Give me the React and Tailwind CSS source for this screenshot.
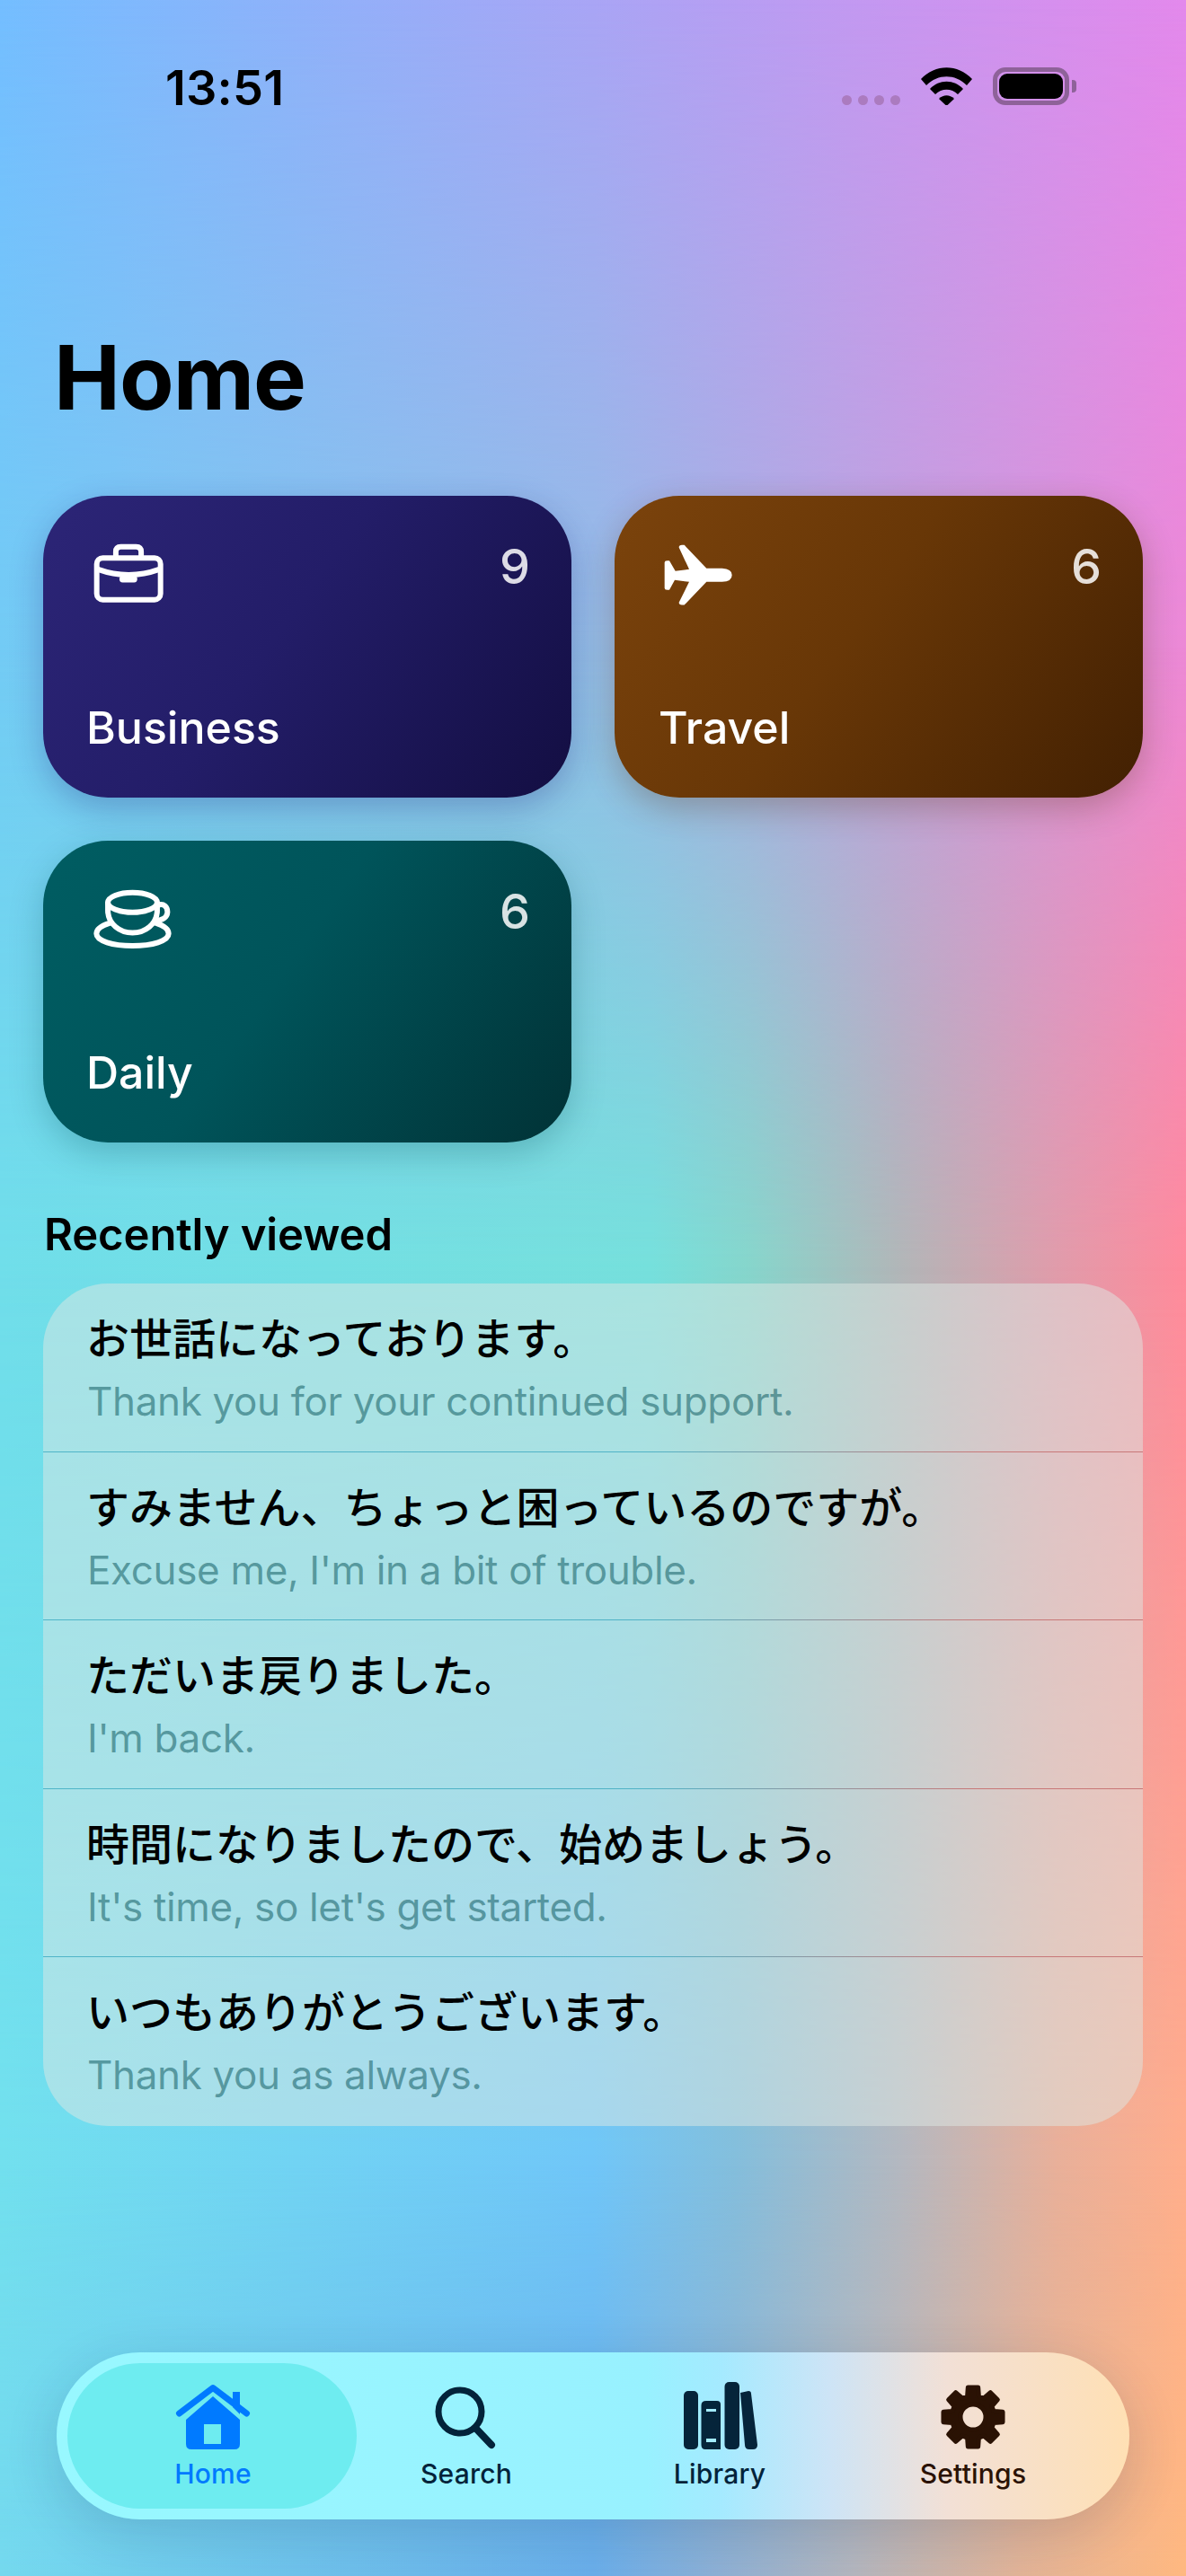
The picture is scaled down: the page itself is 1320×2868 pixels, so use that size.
import React from "react";

const gear = (() => {
  const c = 36, pts = [];
  for (let k = 0; k < 8; k++) {
    const a = (k * Math.PI) / 4 - Math.PI / 2;
    const p = (r, d) => {
      const t = a + d;
      return `${(c + r * Math.cos(t)).toFixed(2)} ${(c + r * Math.sin(t)).toFixed(2)}`;
    };
    pts.push(p(24, -0.27), p(33.5, -0.17), p(33.5, 0.17), p(24, 0.27));
  }
  const hole = `M${c + 14} ${c}A14 14 0 1 0 ${c - 14} ${c}A14 14 0 1 0 ${c + 14} ${c}Z`;
  return `M${pts.join("L")}Z${hole}`;
})();

const Briefcase = () => (
  <svg viewBox="185 195 245 205" width="82" height="68" fill="none" stroke="#fff" strokeWidth="18" strokeLinejoin="round" strokeLinecap="round">
    <rect x="201" y="247" width="214" height="140" rx="20" />
    <path d="M265 245V226Q265 209 282 209H333Q350 209 350 226V245" />
    <path d="M205 285Q308 322 411 285" />
    <path d="M288 318H326" strokeWidth="22" />
  </svg>
);

const Plane = () => (
  <svg viewBox="175 190 240 215" width="80" height="72" fill="#fff">
    <path d="M180 256Q180 250 188 250H196L216 285L262 279L228 206Q228 198 238 198H246L320 276H372Q405 278 405 298Q405 320 372 321H320L246 398H238Q228 398 228 390L262 321L214 315L196 348H188Q180 348 180 342Z" />
  </svg>
);

const Cup = () => (
  <svg viewBox="185 172 272 212" width="91" height="71" fill="none" stroke="#fff" strokeWidth="18" strokeLinecap="round">
    <ellipse cx="321" cy="222" rx="82" ry="33" />
    <path d="M239 224V250C240 295 280 323 321 323C362 323 402 295 403 250V224" />
    <path d="M404 232C425 222 438 238 437 255C436 272 420 282 396 282" />
    <path d="M244 291C215 300 201 313 201 326C201 350 255 366 321 366C387 366 441 350 441 326C441 313 428 300 400 291" />
  </svg>
);

const HomeIcon = () => (
  <svg viewBox="0 0 100 80" width="100" height="80">
    <path d="M72 13H80V38L72 30Z" fill="#007aff" />
    <path d="M50 18L80 44V71Q80 77 74 77H26Q20 77 20 71V44ZM40 49V71H59V49Z" fill="#007aff" fillRule="evenodd" />
    <path d="M12.500 37L50 8.500L87.500 37" fill="none" stroke="#007aff" strokeWidth="7" strokeLinecap="round" strokeLinejoin="round" />
  </svg>
);

const SearchIcon = () => (
  <svg viewBox="0 0 100 80" width="100" height="80" fill="none" stroke="#03233a" strokeWidth="7" strokeLinecap="round">
    <circle cx="43" cy="35" r="24" />
    <path d="M60 53L78 72" strokeWidth="8" />
  </svg>
);

const LibraryIcon = () => (
  <svg viewBox="0 0 100 80" width="100" height="80" fill="#05243a">
    <rect x="10" y="12" width="16" height="65" rx="5" />
    <path d="M35 23H47Q51 23 51 27V77H34Q29.500 77 29.500 72V28Q29.500 23 35 23ZM35 32V35H46V32ZM35 65V69H46V65Z" fillRule="evenodd" />
    <rect x="55.500" y="2" width="16.500" height="75" rx="5" />
    <path d="M73 14L82 12Q85 12 85 15L92 72Q92 77 87 77H83Q78 77 78 72Z" />
  </svg>
);

const SettingsIcon = () => (
  <svg viewBox="-14 -5 100 80" width="100" height="80" fill="#2a1204" stroke="#2a1204" strokeWidth="5" strokeLinejoin="round" fillRule="evenodd">
    <path d={gear} />
  </svg>
);

const cards = [
  { title: "Business", n: 9, Icon: Briefcase, bg: "bg-[linear-gradient(125deg,#2c2577_0%,#231d68_45%,#130e42_100%)]", shadow: "shadow-[0_12px_36px_rgba(30,30,120,0.28)]", ml: "ml-[4px]" },
  { title: "Travel", n: 6, Icon: Plane, bg: "bg-[linear-gradient(125deg,#7b430c_0%,#683707_45%,#422002_100%)]", shadow: "shadow-[0_12px_36px_rgba(90,50,20,0.3)]", ml: "ml-[5px]" },
  { title: "Daily", n: 6, Icon: Cup, bg: "bg-[linear-gradient(125deg,#005d62_0%,#00545a_45%,#013236_100%)]", shadow: "shadow-[0_12px_36px_rgba(0,70,80,0.25)]", ml: "ml-[4px]" },
];

const rows = [
  ["お世話になっております。", "Thank you for your continued support."],
  ["すみません、ちょっと困っているのですが。", "Excuse me, I'm in a bit of trouble."],
  ["ただいま戻りました。", "I'm back."],
  ["時間になりましたので、始めましょう。", "It's time, so let's get started."],
  ["いつもありがとうございます。", "Thank you as always."],
];

const tabs = [
  { label: "Home", Icon: HomeIcon, text: "text-[#007aff]" },
  { label: "Search", Icon: SearchIcon, text: "text-[#03233a]" },
  { label: "Library", Icon: LibraryIcon, text: "text-[#03233a]" },
  { label: "Settings", Icon: SettingsIcon, text: "text-[#2a1204]" },
];

export default function App() {
  return (
    <div className="relative w-[1320px] h-[2868px] overflow-hidden bg-[#74beff] font-['Inter','Noto_Sans_CJK_JP',sans-serif] text-black">
      {/* mesh background */}
      <div className="absolute inset-0 bg-[linear-gradient(90deg,#74beff_0%,#a9a5f5_50%,#e389ec_100%)]" />
      <div className="absolute inset-0 bg-[linear-gradient(90deg,#73cbf5_0%,#94bce6_50%,#ec88d6_100%)] [mask-image:linear-gradient(180deg,transparent_0%,#000_25%)]" />
      <div className="absolute inset-0 bg-[linear-gradient(90deg,#70deea_0%,#76e0dc_55%,#86d6cc_63%,#b2b6b8_76%,#e09cab_89%,#ff8a9c_100%)] [mask-image:linear-gradient(180deg,transparent_25%,#000_49%)]" />
      <div className="absolute inset-0 bg-[linear-gradient(90deg,#72e0ee_0%,#70c6f8_50%,#84bedc_62%,#b4b8c0_76%,#e8b09a_89%,#ffae8c_100%)] [mask-image:linear-gradient(180deg,transparent_49%,#000_84%)]" />
      <div className="absolute inset-0 bg-[linear-gradient(90deg,#74d8ee_0%,#6aaeea_50%,#8cb0d6_60%,#b4b6be_72%,#e2b498_86%,#ffb880_100%)] [mask-image:linear-gradient(180deg,transparent_84%,#000_100%)]" />

      <div className="relative z-10 flex flex-col">
        {/* status bar */}
        <div className="flex items-start justify-between pt-[75px] pl-[184px] pr-[122px] h-[117px]">
          <span className="mt-[2px] text-[54px] leading-[42px] font-semibold tracking-[0.2px]">13:51</span>
          <div className="flex items-start">
            <div className="flex gap-[7px] mt-[31px] mr-[23px]">
              <span className="w-[11px] h-[11px] rounded-full bg-[#ab7bbf]" />
              <span className="w-[11px] h-[11px] rounded-full bg-[#ab7bbf]" />
              <span className="w-[11px] h-[11px] rounded-full bg-[#ab7bbf]" />
              <span className="w-[11px] h-[11px] rounded-full bg-[#ab7bbf]" />
            </div>
            <svg viewBox="0 0 57 42" width="57" height="42" fill="#000">
              <path d="M0 13C16 -4 41 -4 57 13L51 20C38 7 19 7 6 20Z" />
              <path d="M10 24C20 13 37 13 47 24L41 30C34 23 23 23 16 30Z" />
              <path d="M20 35C25 30 32 30 37 35L28.500 43Z" />
            </svg>
            <div className="ml-[23px] w-[85px] h-[42px] rounded-[14px] border-[5px] border-[#8e6299] p-[2px]">
              <div className="w-full h-full rounded-[9px] bg-black" />
            </div>
            <div className="ml-[3px] mt-[14px] w-[5px] h-[14px] rounded-r-[4px] bg-[#8e6299]" />
          </div>
        </div>

        {/* title */}
        <h1 className="mt-[252px] pl-[60px] text-[99px] leading-[102px] font-bold tracking-[-1px]">Home</h1>

        {/* cards */}
        <div className="mt-[81px] px-12 grid grid-cols-2 gap-12">
          {cards.map(({ title, n, Icon, bg, shadow, ml }) => (
            <div key={title} className={`relative h-[336px] rounded-[72px] ${bg} ${shadow} text-white`}>
              <div className="flex items-start justify-between pt-[52px] pl-[54px] pr-[46px]">
                <Icon />
                <span className="mt-[4px] text-[54px] leading-[46px] font-medium text-white/85">{n}</span>
              </div>
              <div className={`absolute left-[44px] bottom-[49px] ${ml} text-[50px] leading-[58px] font-medium`}>{title}</div>
            </div>
          ))}
        </div>

        {/* recent */}
        <h2 className="mt-[74px] pl-[49px] text-[49px] leading-[58px] font-semibold tracking-[-0.1px]">Recently viewed</h2>
        <div className="mt-[25px] mx-12 rounded-[72px] bg-[#dee7e3]/50 overflow-hidden">
          {rows.map(([jp, en], i) => (
            <div key={jp} className="relative h-[187.6px] pl-[49px] pt-[23px]">
              <div className="-ml-[1px] font-['Noto_Sans_CJK_JP',sans-serif] text-[48px] leading-[70px] font-medium">{jp}</div>
              <div className="mt-[11px] text-[44px] leading-[54px] tracking-[-0.35px] text-[#0f5a60]/55">{en}</div>
              {i < 4 && <div className="absolute left-0 right-0 bottom-0 h-px bg-[linear-gradient(90deg,#4fb5c8_0%,#50b2c6_55%,#c87878_85%,#c87878_100%)]" />}
            </div>
          ))}
        </div>

        {/* tab bar */}
        <div className="mt-[252px] mx-[63px] relative h-[186px] rounded-[93px] bg-[linear-gradient(90deg,#98f8ff_0%,#98f1ff_55%,#a5eaff_62%,#cde4f6_72%,#f2e0d6_83%,#ffe0b4_100%)] shadow-[0_16px_60px_rgba(20,40,70,0.16)] flex px-[33px]">
          <div className="absolute left-[12px] top-[12px] w-[322px] h-[162px] rounded-[81px] bg-[#6eecf0]" />
          {tabs.map(({ label, Icon, text }) => (
            <div key={label} className="relative w-[283px] flex flex-col items-center pt-[31px]">
              <Icon />
              <span className={`mt-[6px] text-[30px] leading-[36px] font-medium tracking-[0.2px] ${text}`}>{label}</span>
            </div>
          ))}
        </div>
      </div>
    </div>
  );
}
